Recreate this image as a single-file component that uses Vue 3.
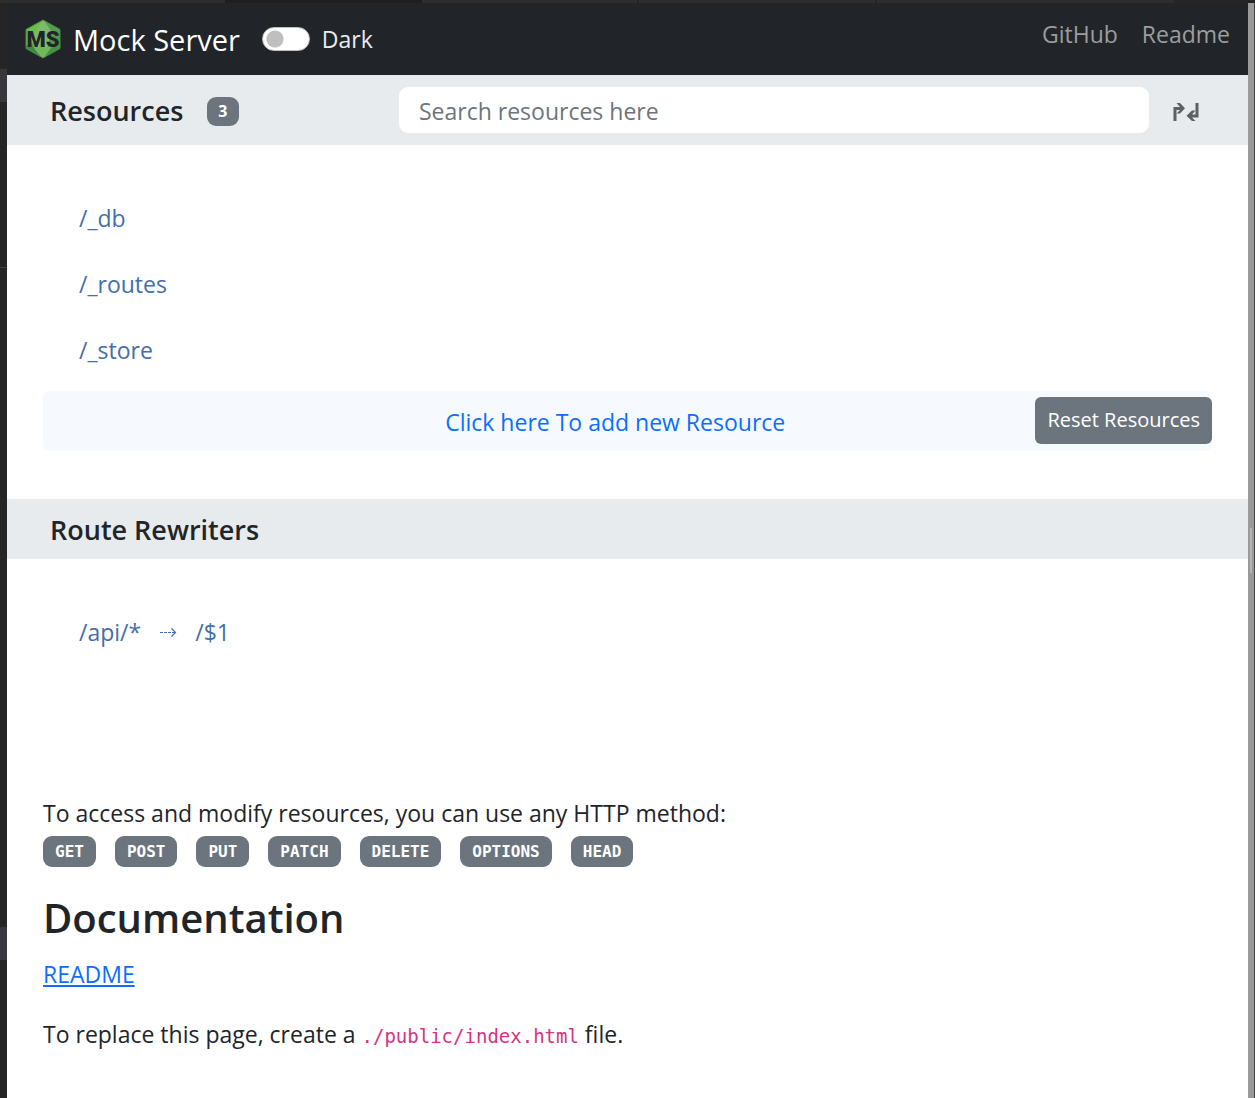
<script setup>
import { ref } from 'vue'

const resources = ['/_db', '/_routes', '/_store']
const rewriters = [{ from: '/api/*', to: '/$1' }]
const methods = ['GET', 'POST', 'PUT', 'PATCH', 'DELETE', 'OPTIONS', 'HEAD']
const dark = ref(false)
const query = ref('')
</script>

<template>
  <div class="window">
    <div class="tab-strip"></div>
    <div class="gutter"></div>
    <div class="page">
      <header class="navbar">
        <a class="brand" href="#">
          <svg class="logo" viewBox="0 0 36 40" aria-hidden="true">
            <defs>
              <clipPath id="hex"><path d="M18 1 35 10.500V29.500L18 39 1 29.500V10.500Z" /></clipPath>
            </defs>
            <g clip-path="url(#hex)">
              <path fill="#4f9a48" d="M0 0h36v40H0z" />
              <path fill="#6abf45" d="M0 0h18L13 20 0 30z" />
              <path fill="#80b96c" d="M18 0 27 10 20 40H14L6 20z" />
              <path fill="#5b9a55" d="M18 0 36 10V20L26 12z" />
              <path fill="#3f8b40" d="M0 26 8 28 18 40H0z" />
              <path fill="#71b85c" d="M10 28H27L18 40z" />
              <path fill="#478f47" d="M27 28h9v3L18 40z" />
            </g>
            <path d="M18 1 35 10.500V29.500L18 39 1 29.500V10.500Z" fill="none" stroke="#468d43" stroke-width="1" />
            <text x="18" y="28" text-anchor="middle" class="logo-text">MS</text>
          </svg>
          <span>Mock Server</span>
        </a>
        <label class="theme">
          <input v-model="dark" class="switch" type="checkbox" role="switch" />
          <span>Dark</span>
        </label>
        <nav class="links">
          <a href="#github">GitHub</a>
          <a href="#readme">Readme</a>
        </nav>
      </header>

      <section>
        <div class="bar search-bar">
          <div class="bar-title">
            <h2>Resources</h2>
            <span class="count">{{ resources.length }}</span>
          </div>
          <input v-model="query" class="search" type="search" aria-label="Search resources" placeholder="Search resources here" />
          <button class="toggle" type="button" aria-label="Expand or collapse all">
            <svg viewBox="0 0 28 20" aria-hidden="true" fill="#5d6163">
              <path d="M1.500 19V5H8L4.500 1H8L13 6.300 8 11.500H4.500L8 8H4.500V19Z" />
              <path d="M26.500 1V15.500H20L23.500 19H20L14.500 13.800 20 8.500H23.500L20 12.500H23.500V1Z" />
            </svg>
          </button>
        </div>
        <ul class="routes">
          <li v-for="r in resources" :key="r"><a :href="r">{{ r }}</a></li>
        </ul>
        <div class="add-row">
          <a class="add" href="#add">Click here To add new Resource</a>
          <button class="reset" type="button">Reset Resources</button>
        </div>
      </section>

      <section class="rewriters">
        <div class="bar"><h2>Route Rewriters</h2></div>
        <ul class="routes">
          <li v-for="r in rewriters" :key="r.from">
            <a href="#rewriter">
              <span>{{ r.from }}</span>
              <svg class="arrow" viewBox="0 0 18 12" aria-label="to" fill="none" stroke="currentColor">
                <path d="M1 6.500H16" stroke-dasharray="3 1" />
                <path d="M12.500 2.500 16.500 6.500 12.500 10.500" stroke-width="1.200" />
              </svg>
              <span>{{ r.to }}</span>
            </a>
          </li>
        </ul>
      </section>

      <main class="docs">
        <p>To access and modify resources, you can use any HTTP method:</p>
        <div class="methods">
          <code v-for="m in methods" :key="m" class="badge">{{ m }}</code>
        </div>
        <h1>Documentation</h1>
        <p><a class="readme" href="#readme">README</a></p>
        <p class="note">To replace this page, create a <code class="path">./public/index.html</code> file.</p>
      </main>
    </div>
    <div class="scrollbar"></div>
  </div>
</template>

<style>
body {
  margin: 0;
  background: #252526;
}
</style>

<style scoped>
* {
  box-sizing: border-box;
}
.window {
  display: grid;
  grid-template-columns: 7px minmax(0, 1fr) 7px;
  grid-template-rows: 3px auto;
  min-height: 100vh;
  font-family: "Open Sans", "Noto Sans", sans-serif;
  font-size: 23px;
  line-height: 36px;
  color: #212529;
}
.tab-strip {
  grid-column: 1 / -1;
  background: linear-gradient(90deg, #2d2d2d 225px, #1e1e1e 225px 422px, #2d2d2d 422px 637px, #252526 637px 639px, #2d2d2d 639px 875px, #252526 875px 877px, #2d2d2d 877px 1174px, #252526 1174px);
}
.gutter {
  background: linear-gradient(#252526 66px, #37373d 66px 99px, #252526 99px 264px, #444 264px 265px, #252526 265px 924px, #37373d 924px 957px, #252526 957px);
}
.scrollbar {
  border-right: 1px solid #444;
  background: linear-gradient(#b4b4b4, #b4b4b4) 2px 50% / 2px 45px no-repeat, #999;
}
.page {
  background: #fff;
}
h1,
h2,
p,
ul {
  margin: 0;
  padding: 0;
}
a {
  text-decoration: none;
}

.navbar {
  display: flex;
  align-items: center;
  height: 72px;
  padding: 0 18px;
  background: #212529;
}
.brand {
  display: flex;
  align-items: center;
  gap: 12px;
  color: #fff;
  font-size: 29px;
  line-height: 40px;
}
.brand span {
  padding-top: 2px;
}
.logo {
  width: 36px;
  height: 40px;
}
.logo-text {
  font: 900 22px Roboto, sans-serif;
  fill: #212529;
}
.theme {
  display: flex;
  align-items: center;
  gap: 12px;
  margin-left: 22px;
  color: #e9ecef;
}
.switch {
  appearance: none;
  width: 48px;
  height: 24px;
  margin: 0;
  border: 1px solid #bfbfbf;
  border-radius: 12px;
  background: radial-gradient(circle at 12px 50%, #bfbfbf 8px, #fff 9px);
}
.switch:checked {
  background: radial-gradient(circle at 34px 50%, #fff 8px, #0d6efd 9px);
}
.links {
  display: flex;
  gap: 24px;
  margin-left: auto;
  padding-bottom: 10px;
}
.links a {
  color: #9b9d9e;
}

.bar {
  display: flex;
  align-items: center;
  min-height: 60px;
  padding: 2px 48px 0 43px;
  background: #e7ebee;
}
.search-bar {
  min-height: 70px;
  padding-top: 0;
}
.bar-title {
  display: flex;
  flex: 0 0 349px;
  align-items: center;
  gap: 24px;
  padding-top: 2px;
}
h2 {
  font-size: 27px;
  font-weight: 600;
}
.count {
  padding: 0 11px;
  border-radius: 9px;
  background: #6c757d;
  color: #fff;
  font-size: 16px;
  font-weight: 700;
  line-height: 29px;
}
.search {
  flex: 1;
  min-width: 0;
  height: 46px;
  padding: 2px 20px 0;
  border: 0;
  border-radius: 9px;
  background: #fff;
  color: #212529;
  font: inherit;
}
.search::placeholder {
  color: #6c757d;
  opacity: 1;
}
.toggle {
  margin-left: 23px;
  padding: 3px 0 0;
  border: 0;
  background: none;
}
.toggle svg {
  display: block;
  width: 28px;
  height: 20px;
}

.routes {
  padding: 40px 36px 0;
  list-style: none;
}
.routes li {
  padding: 15px 36px;
}
.routes a {
  display: flex;
  align-items: center;
  color: #446eaa;
}
.arrow {
  width: 18px;
  height: 12px;
  margin: 0 18px;
}
.add-row {
  display: flex;
  align-items: center;
  height: 60px;
  margin: 8px 36px 0;
  border-radius: 6px;
  background: #f6faff;
}
.add {
  flex: 1;
  padding: 2px 0 0 152px;
  color: #0d6efd;
  text-align: center;
}
.reset {
  height: 47px;
  margin-bottom: 2px;
  padding: 0 12px;
  border: 0;
  border-radius: 6px;
  background: #6c757d;
  color: #fff;
  font: inherit;
  font-size: 20px;
}
.rewriters {
  margin-top: 48px;
}

.docs {
  padding: 130px 36px 40px;
}
.methods {
  display: flex;
  flex-wrap: wrap;
  gap: 19px;
  margin-top: 5px;
}
.badge {
  padding: 1px 12px 0;
  border-radius: 9px;
  background: #6c757d;
  color: #fff;
  font: 700 16px/30px "DejaVu Sans Mono", monospace;
}
h1 {
  margin: 26px 0 13px;
  font-size: 40px;
  font-weight: 600;
  line-height: 50px;
}
.readme {
  color: #0d6efd;
  text-decoration: underline;
}
.note {
  margin-top: 24px;
}
.path {
  color: #d63384;
  font: 19px "DejaVu Sans Mono", monospace;
}
</style>
